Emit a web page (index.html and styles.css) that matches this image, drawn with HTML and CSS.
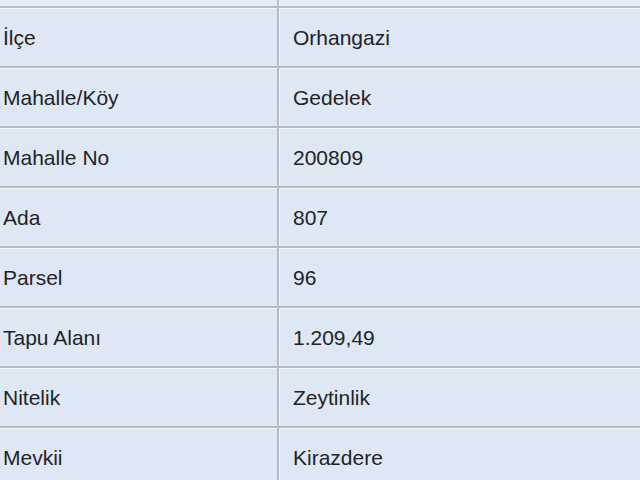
FILE: index.html
```html
<!DOCTYPE html>
<html lang="tr">
<head>
<meta charset="utf-8">
<link rel="stylesheet" href="styles.css">
</head>
<body>
<div class="sheet">
  <div class="row row-top"><div class="key"></div><div class="val"></div></div>
  <div class="row"><div class="key">İlçe</div><div class="val">Orhangazi</div></div>
  <div class="row"><div class="key">Mahalle/Köy</div><div class="val">Gedelek</div></div>
  <div class="row"><div class="key">Mahalle No</div><div class="val">200809</div></div>
  <div class="row"><div class="key">Ada</div><div class="val">807</div></div>
  <div class="row"><div class="key">Parsel</div><div class="val">96</div></div>
  <div class="row"><div class="key">Tapu Alanı</div><div class="val">1.209,49</div></div>
  <div class="row"><div class="key">Nitelik</div><div class="val">Zeytinlik</div></div>
  <div class="row"><div class="key">Mevkii</div><div class="val">Kirazdere</div></div>
</div>
</body>
</html>
```
FILE: styles.css
```css
html, body {
  margin: 0;
  padding: 0;
  background: #dfe9f5;
  overflow: hidden;
}
.sheet {
  width: 640px;
  height: 480px;
  overflow: hidden;
  font-family: "Liberation Sans", Arial, Helvetica, sans-serif;
  font-size: 21px;
  color: #222326;
}
.row {
  display: grid;
  grid-template-columns: 279px 1fr;
  height: 58px;
  border-top: 2px solid #b7bcc3;
  box-shadow: inset 0 1px 0 #f4f7fb;
  background: #dee8f4;
}
.row-top {
  height: 6px;
  border-top: none;
  box-shadow: none;
  background: #e4ecf6;
}
.key {
  display: flex;
  align-items: center;
  padding-left: 3px;
  border-right: 2px solid #b7bcc3;
  padding-top: 1px;
}
.val {
  display: flex;
  align-items: center;
  padding-left: 14px;
  box-shadow: inset 1px 0 0 #f4f7fb;
  padding-top: 1px;
}
```
